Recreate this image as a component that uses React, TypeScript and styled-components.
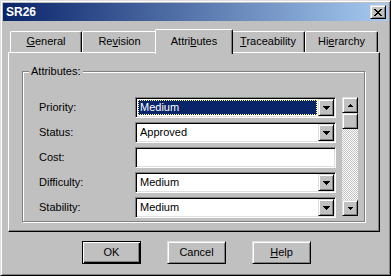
import React from "react";
import styled, { createGlobalStyle, css } from "styled-components";

const FACE = "#c0c0c0";
const LIGHT = "#dfdfdf";
const SHADOW = "#808080";
const DARK = "#000000";
const HI = "#ffffff";
const SEL = "#0a246a";

const Global = createGlobalStyle`
  html, body { margin: 0; padding: 0; background: ${FACE}; }
  body {
    font-family: "Liberation Sans", Arial, sans-serif;
    font-size: 11px;
    color: #000;
  }
  * { box-sizing: border-box; }
`;

const raised = css`
  border: 1px solid;
  border-color: ${LIGHT} ${DARK} ${DARK} ${LIGHT};
  box-shadow: inset 1px 1px 0 ${HI}, inset -1px -1px 0 ${SHADOW};
  background: ${FACE};
`;

const Window = styled.div`
  width: 391px;
  height: 276px;
  background: ${FACE};
  border: 1px solid;
  border-color: ${LIGHT} ${DARK} ${DARK} ${LIGHT};
  box-shadow: inset 1px 1px 0 ${HI}, inset -1px -1px 0 ${SHADOW};
  padding: 2px;
  display: flex;
  flex-direction: column;
`;

const TitleBar = styled.div`
  height: 18px;
  flex: none;
  background: linear-gradient(to right, #0a246a, #a6caf0);
  display: flex;
  align-items: center;
  justify-content: space-between;
  padding: 0 2px 0 3px;
`;

const Title = styled.span`
  color: #fff;
  font-weight: bold;
  font-size: 12px;
  line-height: 14px;
`;

const CloseButton = styled.div`
  ${raised};
  width: 16px;
  height: 14px;
  display: flex;
  align-items: center;
  justify-content: center;
  padding-right: 1px;
`;

const TabArea = styled.div`
  margin-top: 8px;
  padding: 0 8px 0 5px;
  display: flex;
  flex-direction: column;
`;

const TabStrip = styled.div`
  height: 23px;
  display: flex;
  align-items: flex-end;
  padding-left: 2px;
  position: relative;
  z-index: 1;
`;

const Tab = styled.div<{ $w: number; $active?: boolean }>`
  position: relative;
  width: ${(p) => p.$w}px;
  height: 21px;
  background: ${FACE};
  border-top: 1px solid ${HI};
  border-left: 1px solid ${HI};
  border-right: 1px solid ${DARK};
  border-radius: 2px 2px 0 0;
  box-shadow: inset -1px 0 0 ${SHADOW};
  display: flex;
  align-items: center;
  justify-content: center;
  line-height: 13px;
  padding-bottom: 1px;
  ${(p) =>
    p.$active &&
    css`
      width: ${p.$w + 4}px;
      height: 25px;
      margin: 0 -2px -2px;
      z-index: 2;
      padding-bottom: 2px;
    `}
`;

const Panel = styled.div`
  height: 180px;
  border: 1px solid;
  border-color: ${HI} ${DARK} ${DARK} ${HI};
  box-shadow: inset -1px -1px 0 ${SHADOW};
  padding: 18px 14px 9px 13px;
`;

const Group = styled.div`
  position: relative;
  height: 151px;
  border: 1px solid ${SHADOW};
  box-shadow: inset 1px 1px 0 ${HI}, 1px 1px 0 ${HI};
  padding: 25px 6px 0 16px;
  display: flex;
  gap: 6px;
  align-items: flex-start;
`;

const GroupLabel = styled.span`
  position: absolute;
  top: -7px;
  left: 6px;
  padding: 0 2px;
  background: ${FACE};
  line-height: 13px;
`;

const Rows = styled.div`
  display: flex;
  flex-direction: column;
  gap: 4px;
  height: 121px;
  overflow: hidden;
`;

const Row = styled.div`
  display: grid;
  grid-template-columns: 96px 201px;
  align-items: center;
  height: 21px;
`;

const Label = styled.span`
  line-height: 13px;
`;

const Field = styled.div`
  height: 21px;
  border: 1px solid;
  border-color: ${SHADOW} ${HI} ${HI} ${SHADOW};
  box-shadow: inset 1px 1px 0 ${DARK}, inset -1px -1px 0 ${LIGHT};
  background: #fff;
  padding: 1px;
  display: flex;
`;

const ValueArea = styled.div`
  flex: 1;
  padding: 1px;
  display: flex;
`;

const Value = styled.div<{ $selected?: boolean }>`
  flex: 1;
  display: flex;
  align-items: center;
  padding-left: 2px;
  line-height: 13px;
  ${(p) =>
    p.$selected &&
    css`
      background: ${SEL};
      color: #fff;
      outline: 1px dotted #ffff80;
      outline-offset: -1px;
    `}
`;

const DropButton = styled.div`
  ${raised};
  width: 16px;
  height: 17px;
  flex: none;
  display: flex;
  align-items: center;
  justify-content: center;
`;

const ScrollBar = styled.div`
  width: 16px;
  height: 119px;
  flex: none;
  display: flex;
  flex-direction: column;
  background-color: #fff;
  background-image: repeating-conic-gradient(${FACE} 0% 25%, #fff 0% 50%);
  background-size: 2px 2px;
`;

const ScrollButton = styled.div`
  ${raised};
  width: 16px;
  height: 16px;
  flex: none;
  display: flex;
  align-items: center;
  justify-content: center;
`;

const Track = styled.div`
  flex: 1;
`;

const ButtonRow = styled.div`
  margin-top: 9px;
  height: 23px;
  display: flex;
  gap: 26px;
  padding-left: 79px;
`;

const PushButton = styled.div<{ $default?: boolean }>`
  ${raised};
  width: 59px;
  height: 23px;
  display: flex;
  align-items: center;
  justify-content: center;
  line-height: 13px;
  ${(p) =>
    p.$default &&
    css`
      border-color: ${DARK};
      box-shadow: inset 1px 1px 0 ${HI}, inset -1px -1px 0 ${DARK},
        inset -2px -2px 0 ${SHADOW};
    `}
`;

const CloseGlyph = () => (
  <svg width="8" height="7" viewBox="0 0 8 7" shapeRendering="crispEdges">
    {[0, 1, 2, 3, 4, 5, 6].map((i) => {
      const a = i < 3 ? i : i > 3 ? 6 - i : 3;
      const l = i === 3 ? 3 : a;
      const r = i === 3 ? 3 : 6 - a;
      return (
        <g key={i} fill="#000">
          <rect x={l} y={i} width={2} height={1} />
          <rect x={r} y={i} width={2} height={1} />
        </g>
      );
    })}
  </svg>
);

const Arrow = ({ size, up }: { size: number; up?: boolean }) => {
  const rows = Math.ceil(size / 2);
  return (
    <svg width={size} height={rows} viewBox={`0 0 ${size} ${rows}`} shapeRendering="crispEdges">
      {Array.from({ length: rows }).map((_, i) => (
        <rect
          key={i}
          x={i}
          y={up ? rows - 1 - i : i}
          width={size - 2 * i}
          height={1}
          fill="#000"
        />
      ))}
    </svg>
  );
};

type Attr = { label: string; value: string; combo: boolean; selected?: boolean };

const attrs: Attr[] = [
  { label: "Priority:", value: "Medium", combo: true, selected: true },
  { label: "Status:", value: "Approved", combo: true },
  { label: "Cost:", value: "", combo: false },
  { label: "Difficulty:", value: "Medium", combo: true },
  { label: "Stability:", value: "Medium", combo: true },
];

export default function App() {
  return (
    <>
      <Global />
      <Window>
        <TitleBar>
          <Title>SR26</Title>
          <CloseButton>
            <CloseGlyph />
          </CloseButton>
        </TitleBar>
        <TabArea>
          <TabStrip>
            <Tab $w={72}>
              <span>
                <u>G</u>eneral
              </span>
            </Tab>
            <Tab $w={75}>
              <span>
                Re<u>v</u>ision
              </span>
            </Tab>
            <Tab $w={74} $active>
              <span>
                Attri<u>b</u>utes
              </span>
            </Tab>
            <Tab $w={74}>
              <span>
                <u>T</u>raceability
              </span>
            </Tab>
            <Tab $w={73}>
              <span>
                Hi<u>e</u>rarchy
              </span>
            </Tab>
          </TabStrip>
          <Panel>
            <Group>
              <GroupLabel>Attributes:</GroupLabel>
              <Rows>
                {attrs.map((a) => (
                  <Row key={a.label}>
                    <Label>{a.label}</Label>
                    <Field>
                      <ValueArea>
                        <Value $selected={a.selected}>{a.value}</Value>
                      </ValueArea>
                      {a.combo && (
                        <DropButton>
                          <Arrow size={7} />
                        </DropButton>
                      )}
                    </Field>
                  </Row>
                ))}
              </Rows>
              <ScrollBar>
                <ScrollButton>
                  <Arrow size={5} up />
                </ScrollButton>
                <ScrollButton />
                <Track />
                <ScrollButton>
                  <Arrow size={5} />
                </ScrollButton>
              </ScrollBar>
            </Group>
          </Panel>
        </TabArea>
        <ButtonRow>
          <PushButton $default>OK</PushButton>
          <PushButton>Cancel</PushButton>
          <PushButton>
            <span>
              <u>H</u>elp
            </span>
          </PushButton>
        </ButtonRow>
      </Window>
    </>
  );
}
